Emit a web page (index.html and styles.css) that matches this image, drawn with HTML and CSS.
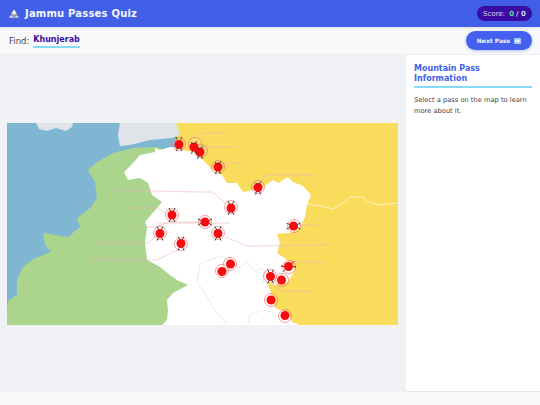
FILE: index.html
```html
<!DOCTYPE html>
<html lang="en">
<head>
<meta charset="utf-8">
<title>Jammu Passes Quiz</title>
<link rel="stylesheet" href="styles.css">
</head>
<body>
<div class="app">
  <header class="topbar">
    <h1 class="title">
      <svg class="logo" viewBox="0 0 10 9" aria-hidden="true">
        <path d="M0 8.500 L5 0.500 L10 8.500 Z" fill="#8b9cad"/>
        <path d="M2.600 4.500 L5 0.500 L7.800 5 L6.500 4.600 L5.500 6 L4.300 4.800 Z" fill="#fff"/>
        <path d="M0 8.500 L2 6.500 L5 8.500 L8 6.800 L10 8.500 Z" fill="#e6edf2"/>
      </svg>
      <span>Jammu Passes Quiz</span>
    </h1>
    <div class="score">Score: <b class="score-num">0</b> <b class="score-sep">/ 0</b></div>
  </header>
  <div class="toolbar">
    <div class="find">Find: <strong class="target">Khunjerab</strong></div>
    <button class="next">Next Pass
      <svg class="arrow" viewBox="0 0 7 6" aria-hidden="true">
        <rect width="7" height="6" rx="1" fill="#a9c8f7"/>
        <path d="M1 2.400 H3.500 V1 L6 3 L3.500 5 V3.600 H1 Z" fill="#fff"/>
      </svg>
    </button>
  </div>
  <main class="main">
    <section class="stage">
      <svg class="map" viewBox="7 123 391 202" aria-label="Map">
        <defs>
          <path id="legs" class="ticks" d="M-3 -7 L-1.500 -4 M3 -7 L1.500 -4 M-3 7 L-1.500 4 M3 7 L1.500 4"/>
          <path id="legs-low" class="ticks" d="M-2.500 7 L-1.500 4 M2.500 7 L1.500 4 M-3 -5 L-1 -3 M3 -6 L1 -3"/>
        </defs>
        <rect class="sea" x="7" y="123" width="391" height="202"/>
        <path class="ice" d="M36 123 L39 129 L47 131 L56 128 L66 131 L72 127 L73 123 Z"/>
        <path class="china" d="M176 123 H398 V325 H176 Z"/>
        <path class="ice" d="M120 123 L118 135 L120 146 L130 145 L150 140 L172 138 L180 135 L176 123 Z"/>
        <path class="pak" d="M88 170 L97 162 L113 153 L133 148 L157 147 L190 160 L190 325 H7 V306 L9 300 L17 295 L17 280 L23 267 L33 259 L51 252 L45 245 L43 233 L68 237 L80 227 L77 218 L90 208 L97 198 L95 182 Z"/>
        <path class="india" d="M155 148 L160 150 L170 147 L173 147 L183 150 L193 152 L203 160 L213 170 L222 175 L227 183 L237 183 L243 192 L252 190 L263 187 L273 180 L278 183 L288 177 L293 182 L303 186 L311 195 L307 205 L305 217 L300 228 L290 233 L277 234 L280 243 L277 253 L290 262 L295 270 L288 282 L275 285 L267 282 L272 295 L275 308 L280 310 L288 313 L292 322 L300 325 H162 L167 320 L168 310 L167 300 L173 293 L188 285 L177 280 L170 275 L160 267 L147 260 L145 243 L147 227 L145 222 L162 202 L152 195 L148 183 L140 178 L128 180 L124 172 L133 163 L140 155 L155 152 Z"/>
        <path class="river" d="M308 204 L320 206 L333 209 L343 203 L350 197 L363 197 L367 202 L380 205 L397 203"/>
        <path class="district" d="M197 282 L200 264 L215 258 L222 256 L228 262 L240 268 L247 262 L255 272 L262 268 L265 272 L263 283"/>
        <path class="district" d="M197 282 L205 293 L213 307 L218 315 L227 323 M248 323 L250 315 L263 310 L275 313"/>
        <path class="leader" d="M198 138 L202 133 H225 M203 147 H237 M223 163 H242 M260 183 L267 175 H315 M113 190 L200 192 H213 L225 203 M128 208 H157 L167 213 M138 227 H155 L170 222 H200 M93 243 H147 L157 236 M88 259 L157 260 L177 250 M225 237 L248 246 L328 245 M297 225 H317 M290 262 H325 M272 282 L280 291 H312 M157 223 H230"/>
        <g class="rings">
          <circle cx="179" cy="144" r="6.500"/><circle cx="195" cy="144" r="6.500"/><circle cx="201" cy="151" r="6.500"/><circle cx="218" cy="167" r="6.500"/><circle cx="258" cy="187" r="6.500"/><circle cx="231" cy="207" r="6.500"/><circle cx="172" cy="215" r="6.500"/><circle cx="205" cy="222" r="6.500"/><circle cx="160" cy="233" r="6.500"/><circle cx="181" cy="244" r="6.500"/><circle cx="218" cy="233" r="6.500"/><circle cx="294" cy="226" r="6.500"/><circle cx="230" cy="264" r="6.500"/><circle cx="222" cy="271" r="6.500"/><circle cx="289" cy="267" r="6.500"/><circle cx="270" cy="276" r="6.500"/><circle cx="282" cy="280" r="6.500"/><circle cx="271" cy="300" r="6.500"/><circle cx="285" cy="316" r="6.500"/>
        </g>
        <g class="dots">
          <circle cx="179" cy="144.500" r="4.500"/><circle cx="194" cy="147" r="4.500"/><circle cx="200" cy="152" r="4.500"/><circle cx="218" cy="167" r="4.500"/><circle cx="258" cy="187.500" r="4.500"/><circle cx="231" cy="208" r="4.500"/><circle cx="172" cy="215" r="4.500"/><circle cx="205" cy="222" r="4.500"/><circle cx="160" cy="233.500" r="4.500"/><circle cx="181" cy="243.500" r="4.500"/><circle cx="218" cy="233.500" r="4.500"/><circle cx="293.500" cy="226" r="4.500"/><circle cx="230.500" cy="264" r="4.500"/><circle cx="222" cy="271.500" r="4.500"/><circle cx="288.500" cy="266.500" r="4.500"/><circle cx="270.500" cy="276.500" r="4.500"/><circle cx="281.500" cy="280" r="4.500"/><circle cx="271" cy="300" r="4.500"/><circle cx="285" cy="315.500" r="4.500"/>
        </g>
        <use href="#legs" transform="translate(179 144)"/>
        <use href="#legs-low" transform="translate(194 147)"/>
        <use href="#legs-low" transform="translate(200 152)"/>
        <use href="#legs-low" transform="translate(218 167)"/>
        <use href="#legs-low" transform="translate(258 187.500)"/>
        <use href="#legs" transform="translate(231 208)"/>
        <use href="#legs" transform="translate(172 215)"/>
        <use href="#legs" transform="translate(205 222) rotate(90)"/>
        <use href="#legs" transform="translate(160 233.500)"/>
        <use href="#legs" transform="translate(181 243.500)"/>
        <use href="#legs" transform="translate(218 233.500)"/>
        <use href="#legs" transform="translate(293.500 226) rotate(90)"/>
        <use href="#legs" transform="translate(288.500 266.500) rotate(70)"/>
        <use href="#legs" transform="translate(270.500 276.500)"/>
      </svg>
    </section>
    <aside class="panel">
      <h2 class="panel-title">Mountain Pass Information</h2>
      <p class="panel-text">Select a pass on the map to learn more about it.</p>
    </aside>
  </main>
  <footer class="footer"></footer>
</div>
</body>
</html>
```
FILE: styles.css
```css
* { box-sizing: border-box; }
html, body { margin: 0; height: 100%; }
body { font-family: "DejaVu Sans", sans-serif; color: #333; background: #f8f9fa; overflow: hidden; }
.app { display: flex; flex-direction: column; height: 405px; }
.topbar { flex: 0 0 27px; background: #415fe6; color: #fff; display: flex; align-items: center; justify-content: space-between; padding: 0 8px 0 9px; box-shadow: 0 1px 3px rgba(0,0,0,.12); position: relative; }
.title { margin: 0; font-size: 10px; font-weight: 700; display: flex; align-items: center; gap: 6px; letter-spacing: .2px; color: #f4f6ff; }
.logo { width: 10px; height: 9px; }
.score { background: #3a0ca3; border-radius: 10px; height: 15px; width: 55px; display: flex; align-items: center; justify-content: center; gap: 2px; font-size: 7px; color: #d9d6f0; white-space: pre; }
.score-num { color: #68d8b4; font-weight: 700; }
.score-sep { font-weight: 700; color: #c9dcff; }
.toolbar { flex: 0 0 28px; background: #f8f9fa; display: flex; align-items: center; justify-content: space-between; padding: 0 8px 0 9px; border-bottom: 1px solid #eceef1; }
.find { font-size: 8.500px; color: #444; display: flex; gap: 4px; align-items: center; }
.target { color: #3a0ca3; font-size: 8px; font-weight: 700; border-bottom: 2px solid #86daf3; line-height: 10px; padding-bottom: 1px; margin-top: 1px; }
.next { border: 0; background: #4361ee; color: #f4f6ff; font: 700 6px "DejaVu Sans", sans-serif; width: 66px; height: 19px; border-radius: 10px; box-shadow: 0 1px 3px rgba(67,97,238,.4); display: flex; align-items: center; justify-content: center; gap: 4px; padding: 0; }
.arrow { width: 7px; height: 6px; }
.main { flex: 0 0 337px; display: flex; }
.stage { width: 406px; background: #f0f2f5; padding: 68px 8px 0 7px; }
.map { display: block; width: 391px; height: 202px; }
.sea { fill: #7fb7d3; }
.ice { fill: #e0e4e9; }
.china { fill: #f9dc5c; }
.pak { fill: #abd48d; }
.india { fill: #fff; }
.river { fill: none; stroke: #fdf1bd; stroke-width: 1; }
.district { fill: none; stroke: #d4d4d4; stroke-width: .5; }
.leader { fill: none; stroke: #eeb4bd; stroke-width: .6; }
.rings circle { fill: rgba(255,255,255,.15); stroke: #ee7468; stroke-width: .7; }
.ticks { fill: none; stroke: #333; stroke-width: .9; }
.dots circle { fill: #f80b10; }
.panel { width: 134px; background: #fff; padding: 9px 8px; border-bottom: 1px solid #e8e8e8; }
.panel-title { margin: 0 0 7px; padding-bottom: 2px; font-size: 8px; line-height: 10px; font-weight: 700; color: #4361ee; border-bottom: 2px solid #86daf3; }
.panel-text { margin: 0; font-size: 6.700px; line-height: 11px; color: #444; }
.footer { flex: 1; background: #f8f9fa; }
```
